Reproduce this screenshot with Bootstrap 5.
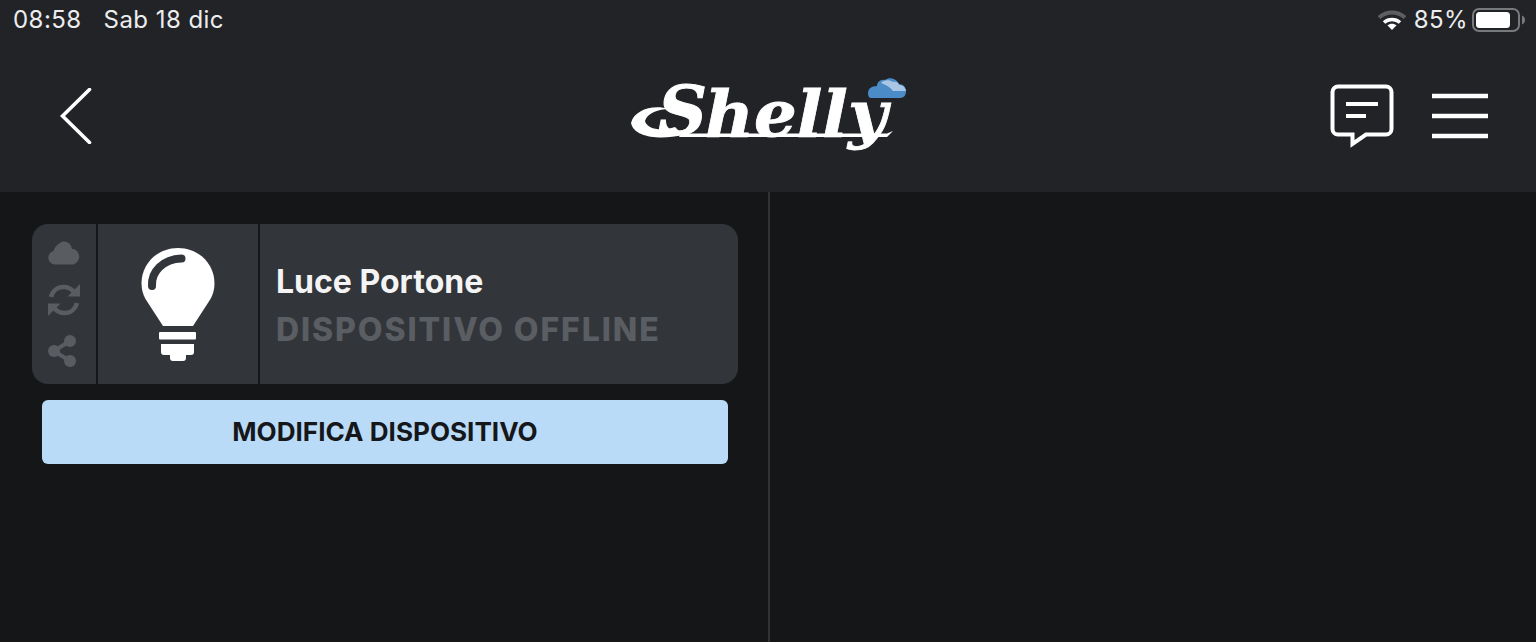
<!DOCTYPE html>
<html lang="it">
<head>
<meta charset="utf-8">
<title>Shelly</title>
<link href="https://cdn.jsdelivr.net/npm/bootstrap@5.3.0/dist/css/bootstrap.min.css" rel="stylesheet">
<style>
html,body{height:100%;}
body{background:#151618;font-family:"Inter","Liberation Sans",sans-serif;color:#fff;overflow:hidden;}
.app-shell{height:642px;}
.top-head{background:#212327;height:192px;flex:none;}
.status-row{height:40px;padding:0 10px 0 13px;font-size:24px;color:#ededee;letter-spacing:.45px;line-height:40px;}
.status-date{margin-left:22px;}
.tool-row{height:152px;padding:0 48px 0 60px;}
.logo-slot{left:631px;top:36px;position:absolute;}
.head-wrap{position:relative;}
.tool-end{gap:38px;}
.pane-left{width:768px;flex:none;padding:32px 30px 0 32px;}
.pane-split{width:2px;flex:none;background:#303236;}
.dev-tile{height:160px;background:#32353a;border-radius:16px;overflow:hidden;}
.tile-state{width:64px;flex:none;padding-top:17px;gap:19px;}
.tile-state svg{display:block;margin-left:16px;}
.tile-sep{width:2px;flex:none;background:#151618;}
.tile-bulb{width:160px;flex:none;}
.tile-text{padding:36px 0 0 16px;}
.dev-name{font-size:32px;font-weight:650;line-height:44px;color:#f4f4f5;}
.dev-state{font-size:32px;font-weight:800;line-height:44px;color:#5a5d62;letter-spacing:1.9px;margin-top:4px;}
.edit-btn{margin:16px 10px 0;height:64px;width:686px;background:#b9dbf8;border:0;border-radius:6px;color:#15171a;font-size:26.1px;font-weight:700;padding:0;}
.edit-btn:hover,.edit-btn:active{background:#b9dbf8!important;color:#15171a!important;}
</style>
</head>
<body>
<div class="app-shell d-flex flex-column">
  <header class="top-head head-wrap">
    <div class="status-row d-flex justify-content-between align-items-center">
      <div><span>08:58</span><span class="status-date">Sab 18 dic</span></div>
      <div class="d-flex align-items-center">
        <svg width="28" height="20" viewBox="0 0 28 20"><path d="M1 7.500C8.500 .8 19.500 .8 27 7.500" fill="none" stroke="#5c5e62" stroke-width="4"/><path d="M6 12.500C10.500 8.500 17.500 8.500 22 12.500" fill="none" stroke="#fff" stroke-width="3.600"/><path d="M14 20l-4.600-4.700c2.700-2.100 6.500-2.100 9.200 0z" fill="#fff"/></svg>
        <span class="ms-2">85%</span>
        <svg width="54" height="24" viewBox="0 0 54 24" class="ms-1"><rect x="1" y="1" width="46" height="22" rx="6" fill="none" stroke="#77797c" stroke-width="2"/><rect x="4" y="4" width="34" height="16" rx="3.500" fill="#fff"/><path d="M50 7.500c2 .8 3 2.500 3 4.500s-1 3.700-3 4.500z" fill="#77797c"/></svg>
      </div>
    </div>
    <div class="tool-row d-flex justify-content-between align-items-center">
      <svg width="32" height="56" viewBox="0 0 32 56" aria-label="Indietro"><path d="M29.500 1.500 2.500 28l27 26.500" fill="none" stroke="#fff" stroke-width="3.600" stroke-linecap="round"/></svg>
      <div class="d-flex align-items-center tool-end">
        <svg width="64" height="64" viewBox="0 0 64 64" aria-label="Messaggi"><path d="M8 2.500h48a5.500 5.500 0 0 1 5.500 5.500v37a5.500 5.500 0 0 1-5.500 5.500H36L22.500 60V50.500H8A5.500 5.500 0 0 1 2.500 45V8A5.500 5.500 0 0 1 8 2.500z" fill="none" stroke="#fff" stroke-width="4"/><path d="M16 20h32M16 32h20" stroke="#fff" stroke-width="4" fill="none"/></svg>
        <svg width="56" height="46" viewBox="0 0 56 46" aria-label="Menu"><path d="M0 3h56M0 23h56M0 43h56" stroke="#fff" stroke-width="4.600" fill="none"/></svg>
      </div>
    </div>
    <svg class="logo-slot" width="280" height="124" viewBox="0 0 280 124" aria-label="Shelly">
      <path d="M0 87C3 74 22 68 38 73C28 73 16 77 14 85C16 93 30 96 44 91L52 99C30 104 3 102 0 87z" fill="#fff"/>
      <path d="M50 97.500H256L262 95L256 101H48z" fill="#fff"/>
      <text x="27" y="98" font-family="DejaVu Serif" font-style="italic" font-weight="700" font-size="68" fill="#fff" stroke="#fff" stroke-width="1">S</text>
      <text x="74" y="100" font-family="DejaVu Serif" font-style="italic" font-weight="700" font-size="64" fill="#fff" stroke="#fff" stroke-width=".8" textLength="182" lengthAdjust="spacingAndGlyphs">helly</text>
      <path d="M240 62h29c5 0 6-4 6-7 0-4-3-7-7-7-2-5-9-8-14-4-5-1-8 3-8 6-6 0-9 3-9 7 0 3 1 5 3 5z" fill="#4b8bc8"/>
      <path d="M250 47c2-3 8-4 12-1 3-1 6 1 6 3 4 0 6 2 7 6h-13c-3-4-7-6-12-8z" fill="#a9c7e4"/>
    </svg>
  </header>
  <main class="d-flex flex-grow-1">
    <section class="pane-left">
      <div class="dev-tile d-flex">
        <div class="tile-state d-flex flex-column">
          <svg width="32" height="24" viewBox="0 0 32 24"><path d="M7 23.500a6.800 6.800 0 0 1-1.500-13.400C6.500 5.800 9.500 3 13.500 1c5-1.500 9.500 1.500 10.500 7 1-.4 5 .5 6 3.500 3.500 5-1 12-6 12z" fill="#595c61"/></svg>
          <svg width="32" height="32" viewBox="0 0 32 32"><g fill="none" stroke="#595c61" stroke-width="4.600"><path d="M3 13C4.500 7 9.500 3 15.500 3c4.500 0 8 2 10.500 5"/><path d="M29 19c-1.500 6-6.500 10-12.500 10-4.500 0-8-2-10.500-5"/></g><path d="M32 0v12.500H19.500zM0 32V19.500h12.500z" fill="#595c61"/></svg>
          <svg width="28" height="32" viewBox="0 0 28 32"><path d="M22 6 6 16l16 10" fill="none" stroke="#595c61" stroke-width="4"/><circle cx="22" cy="6" r="6" fill="#595c61"/><circle cx="6" cy="16" r="6" fill="#595c61"/><circle cx="22" cy="26" r="6" fill="#595c61"/></svg>
        </div>
        <div class="tile-sep"></div>
        <div class="tile-bulb d-flex justify-content-center align-items-center">
          <svg width="76" height="114" viewBox="0 0 76 114">
            <path d="M38 1C17 1 1.500 17 1.500 36.500c0 6 1.500 11 4 15.500L23 79h30l17.500-27c2.500-4.500 4-9.500 4-15.500C74.500 17 59 1 38 1z" fill="#fff"/>
            <path d="M12 39C11 25 23 12 41.500 11.500" fill="none" stroke="#32353a" stroke-width="8" stroke-linecap="round"/>
            <rect x="19" y="85" width="37" height="7.500" rx="1" fill="#fff"/>
            <path d="M21 97h33v8a3 3 0 0 1-3 3h-5v3a3 3 0 0 1-3 3H33a3 3 0 0 1-3-3v-3h-6a3 3 0 0 1-3-3z" fill="#fff"/>
          </svg>
        </div>
        <div class="tile-sep"></div>
        <div class="tile-text">
          <div class="dev-name">Luce Portone</div>
          <div class="dev-state">DISPOSITIVO OFFLINE</div>
        </div>
      </div>
      <button type="button" class="btn edit-btn d-block">MODIFICA DISPOSITIVO</button>
    </section>
    <div class="pane-split"></div>
    <section class="flex-grow-1"></section>
  </main>
</div>
</body>
</html>
